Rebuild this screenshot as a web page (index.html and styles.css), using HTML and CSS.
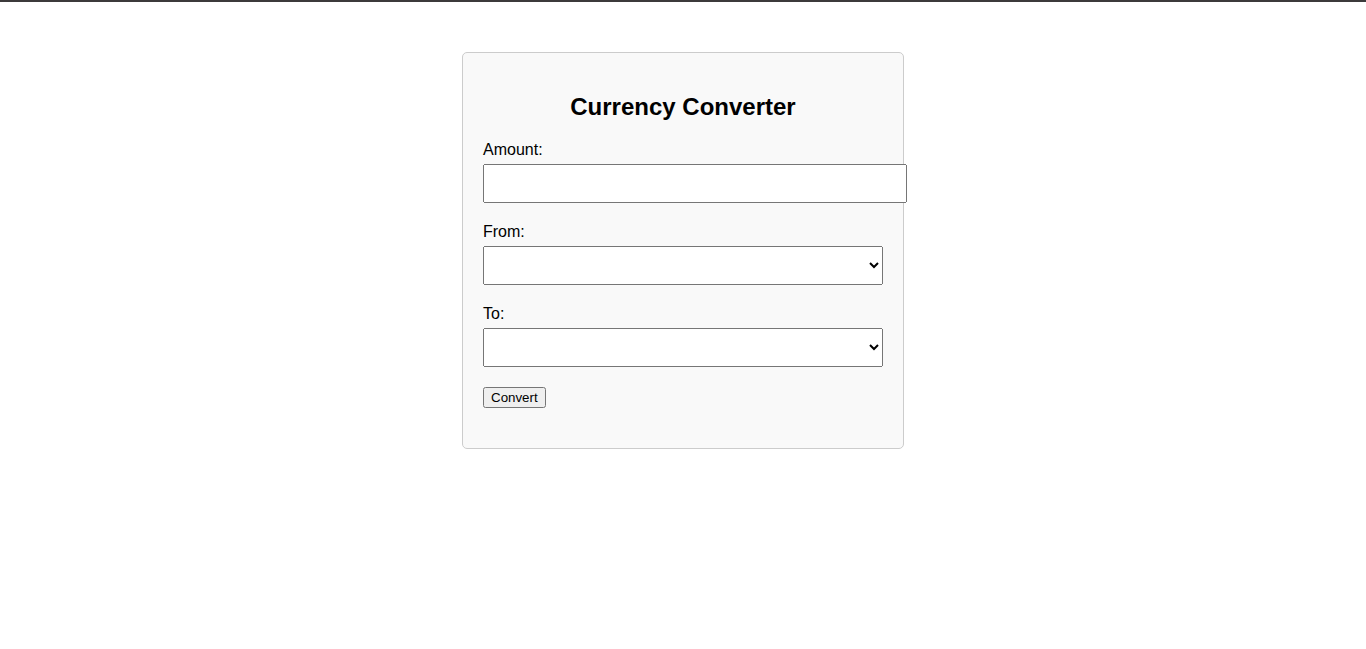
FILE: index.html
```html
<!DOCTYPE html>
<html lang="en">
<head>
<meta charset="utf-8">
<meta name="viewport" content="width=device-width, initial-scale=1">
<title>Currency Converter</title>
<link rel="stylesheet" href="styles.css">
</head>
<body>
<main class="container">
  <h2 class="title">Currency Converter</h2>
  <form>
    <div class="form-group">
      <label class="field-label" for="amount">Amount:</label>
      <input class="field" type="number" id="amount">
    </div>
    <div class="form-group">
      <label class="field-label" for="from">From:</label>
      <select class="field" id="from"></select>
    </div>
    <div class="form-group">
      <label class="field-label" for="to">To:</label>
      <select class="field" id="to"></select>
    </div>
    <button type="button">Convert</button>
  </form>
  <div class="result"></div>
</main>
</body>
</html>
```
FILE: styles.css
```css
body {
  margin: 0;
  border-top: 2px solid #3c3a3b;
  font-family: "Liberation Sans", Arial, sans-serif;
  background: #fff;
}

.container {
  max-width: 400px;
  margin: 50px auto;
  padding: 20px;
  border: 1px solid #ccc;
  border-radius: 5px;
  background: #f9f9f9;
}

.title {
  margin: 20px 0;
  font-size: 24px;
  line-height: 28px;
  text-align: center;
}

.form-group {
  margin-bottom: 20px;
}

.field-label {
  display: block;
  margin-bottom: 5px;
  line-height: 18px;
}

.field {
  width: 100%;
  padding: 10px;
  font-family: inherit;
  font-size: 13px;
}

.result {
  margin-top: 20px;
}
```
